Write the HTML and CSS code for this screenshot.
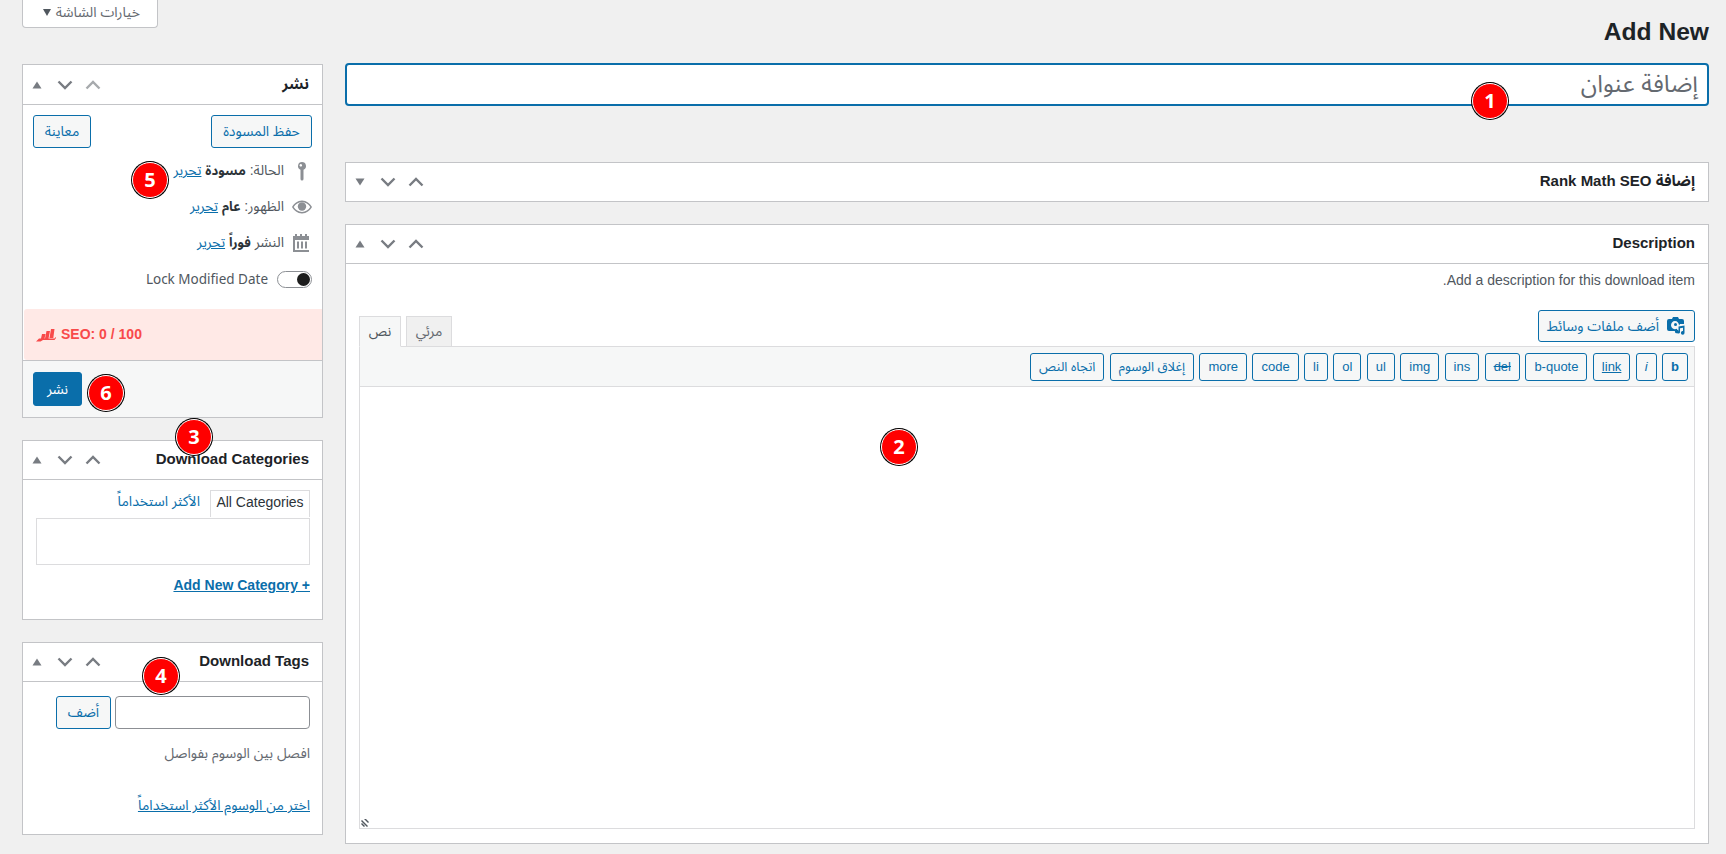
FILE: index.html
```html
<!DOCTYPE html>
<html lang="ar" dir="rtl">
<head>
<meta charset="utf-8">
<title>Add New</title>
<link rel="stylesheet" href="styles.css">
</head>
<body>
<div class="page">
  <header class="top">
    <h1 class="page-title" dir="ltr">Add New</h1>
    <button class="screen-options"><span>خيارات الشاشة</span><i class="screen-arrow"></i></button>
  </header>

  <div class="columns">
    <main class="main">
      <div class="title-input">إضافة عنوان</div>

      <section class="box collapsed rank">
        <div class="box-head">
          <h2>إضافة Rank Math SEO</h2>
          <div class="ctrls">
            <svg class="chev" viewBox="0 0 28 16"><path d="M7.500 11.500l6.500-6.500 6.500 6.500"/></svg>
            <svg class="chev" viewBox="0 0 28 16"><path d="M7.500 4.500l6.500 6.500 6.500-6.500"/></svg>
            <svg class="tri" viewBox="0 0 28 16"><path d="M9.500 4.500h9l-4.500 7z"/></svg>
          </div>
        </div>
      </section>

      <section class="box desc">
        <div class="box-head">
          <h2>Description</h2>
          <div class="ctrls">
            <svg class="chev" viewBox="0 0 28 16"><path d="M7.500 11.500l6.500-6.500 6.500 6.500"/></svg>
            <svg class="chev" viewBox="0 0 28 16"><path d="M7.500 4.500l6.500 6.500 6.500-6.500"/></svg>
            <svg class="tri" viewBox="0 0 28 16"><path d="M9.500 11.500h9l-4.500-7z"/></svg>
          </div>
        </div>
        <div class="desc-body">
          <p class="desc-note">Add a description for this download item.</p>
          <div class="editor-bar">
            <button class="btn media-btn">
              <svg class="media-icon" viewBox="0 0 18 18"><path fill-rule="evenodd" d="M2 2h3l1-2h5l1 2h3a2 2 0 0 1 2 2v3h-4l-1 1.500a4 4 0 1 0-3 3.500l1-.3V14H2a2 2 0 0 1-2-2V4a2 2 0 0 1 2-2z"/><circle cx="8.500" cy="7.500" r="1.500"/><path d="M10 16.200a1.800 1.800 0 1 1 1.500-1.800V9.500l6-1v7.300a1.800 1.800 0 1 1-1.500-1.700v-3.300l-3 .5v4.100a1.800 1.800 0 0 1-3 .5z"/></svg>
              <span>أضف ملفات وسائط</span>
            </button>
            <div class="tabs">
              <span class="tab">مرئي</span>
              <span class="tab active">نص</span>
            </div>
          </div>
          <div class="toolbar">
            <button class="qt b">b</button>
            <button class="qt it">i</button>
            <button class="qt un">link</button>
            <button class="qt">b-quote</button>
            <button class="qt del">del</button>
            <button class="qt">ins</button>
            <button class="qt">img</button>
            <button class="qt">ul</button>
            <button class="qt">ol</button>
            <button class="qt">li</button>
            <button class="qt">code</button>
            <button class="qt">more</button>
            <button class="qt">إغلاق الوسوم</button>
            <button class="qt">اتجاه النص</button>
          </div>
          <div class="editor">
            <svg class="grip" viewBox="0 0 8 8"><path d="M0 2l1-1 6 6-1 1zM0 5l1-1 3 3-1 1zM3 0l1-1 4 4-1 1z"/></svg>
          </div>
        </div>
      </section>
    </main>

    <aside class="side">
      <section class="box publish">
        <div class="box-head">
          <h2>نشر</h2>
          <div class="ctrls">
            <svg class="chev off" viewBox="0 0 28 16"><path d="M7.500 11.500l6.500-6.500 6.500 6.500"/></svg>
            <svg class="chev" viewBox="0 0 28 16"><path d="M7.500 4.500l6.500 6.500 6.500-6.500"/></svg>
            <svg class="tri" viewBox="0 0 28 16"><path d="M9.500 11.500h9l-4.500-7z"/></svg>
          </div>
        </div>
        <div class="pub-actions">
          <button class="btn save">حفظ المسودة</button>
          <button class="btn preview">معاينة</button>
        </div>
        <div class="pub-row">
          <svg class="pub-icon" viewBox="0 0 20 20"><path fill-rule="evenodd" d="M10 1a4 4 0 0 1 1.500 7.700V18a1.500 1.500 0 0 1-3 0V8.700A4 4 0 0 1 10 1zM8.800 3a1.300 1.300 0 1 0 .01 0z"/></svg>
          <span>الحالة: <b>مسودة</b> <a href="#">تحرير</a></span>
        </div>
        <div class="pub-row">
          <svg class="pub-icon" viewBox="0 0 20 20"><path fill-rule="evenodd" d="M10 3.500c4.500 0 8 3 10 6.500-2 3.500-5.500 6.500-10 6.500S2 13.500 0 10c2-3.500 5.500-6.500 10-6.500zM10 5c-3.500 0-6.500 2.200-8.300 5 1.800 2.800 4.800 5 8.300 5s6.500-2.200 8.300-5C16.500 7.200 13.500 5 10 5z"/><circle cx="10" cy="9.500" r="4.200"/></svg>
          <span>الظهور: <b>عام</b> <a href="#">تحرير</a></span>
        </div>
        <div class="pub-row">
          <svg class="pub-icon" viewBox="0 0 20 20"><path fill-rule="evenodd" d="M1 3h2V1h2v2h3V1h2v2h3V1h2v2h2v16H1zM3 7v10h14V7z"/><path d="M5 8.500h2v7H5zM9 8.500h2v7H9zM13 8.500h2v7h-2z"/></svg>
          <span>النشر <b>فوراً</b> <a href="#">تحرير</a></span>
        </div>
        <div class="pub-row lock">
          <span class="toggle"><i></i></span>
          <span class="lock-label" dir="ltr">Lock Modified Date</span>
        </div>
        <div class="seo" dir="ltr">
          <svg class="seo-icon" viewBox="0 0 20 14"><path d="M6 6h3.500l-1 4.500H5zM10.500 3H14l-1.500 7.500H9zM15 1h3.500l-1.200 9H13.500zM0 13.500l3-3h15.500l1-1.500 .5 1-1.500 2H7l-2.500 1.500z"/></svg>
          <span>SEO: 0 / 100</span>
        </div>
        <div class="pub-foot">
          <button class="btn primary">نشر</button>
        </div>
      </section>

      <section class="box cats">
        <div class="box-head">
          <h2>Download Categories</h2>
          <div class="ctrls">
            <svg class="chev" viewBox="0 0 28 16"><path d="M7.500 11.500l6.500-6.500 6.500 6.500"/></svg>
            <svg class="chev" viewBox="0 0 28 16"><path d="M7.500 4.500l6.500 6.500 6.500-6.500"/></svg>
            <svg class="tri" viewBox="0 0 28 16"><path d="M9.500 11.500h9l-4.500-7z"/></svg>
          </div>
        </div>
        <div class="cats-body">
          <div class="cat-tabs">
            <span class="cat-tab">All Categories</span>
            <a class="cat-link" href="#">الأكثر استخداماً</a>
          </div>
          <div class="cat-list"></div>
          <a class="add-cat" href="#">+ Add New Category</a>
        </div>
      </section>

      <section class="box tags">
        <div class="box-head">
          <h2>Download Tags</h2>
          <div class="ctrls">
            <svg class="chev" viewBox="0 0 28 16"><path d="M7.500 11.500l6.500-6.500 6.500 6.500"/></svg>
            <svg class="chev" viewBox="0 0 28 16"><path d="M7.500 4.500l6.500 6.500 6.500-6.500"/></svg>
            <svg class="tri" viewBox="0 0 28 16"><path d="M9.500 11.500h9l-4.500-7z"/></svg>
          </div>
        </div>
        <div class="tags-body">
          <div class="tag-form">
            <div class="tag-input"></div>
            <button class="btn add">أضف</button>
          </div>
          <p class="tag-hint">افصل بين الوسوم بفواصل</p>
          <a class="tag-link" href="#">اختر من الوسوم الأكثر استخداماً</a>
        </div>
      </section>
    </aside>
  </div>

  <span class="badge n1">1</span>
  <span class="badge n2">2</span>
  <span class="badge n3">3</span>
  <span class="badge n4">4</span>
  <span class="badge n5">5</span>
  <span class="badge n6">6</span>
</div>
</body>
</html>
```
FILE: styles.css
```css
* { box-sizing: border-box; }
html, body { margin: 0; height: 100%; }
body {
  background: #f0f0f0;
  color: #3c434a;
  font-family: "Liberation Sans", "Noto Sans Arabic", sans-serif;
  font-size: 14px;
  line-height: 1.4;
  overflow: hidden;
}
a { color: #0a6eaa; }
button { font-family: inherit; cursor: pointer; }
.page { position: relative; height: 854px; padding: 0 17px 0 22px; }

.top { display: flex; justify-content: space-between; align-items: flex-start; height: 63px; }
.page-title { margin: 14px 0 0; font-size: 24.6px; line-height: 36px; font-weight: 700; color: #1d2327; }
.screen-options {
  display: flex; align-items: center; gap: 5px;
  width: 136px; height: 28px; padding: 0 17px 2px 0;
  background: #fff; color: #646970; font-size: 14px;
  border: 1px solid #c3c4c7; border-top: 0; border-radius: 0 0 4px 4px;
}
.screen-arrow { width: 0; height: 0; border: 4px solid transparent; border-top: 7px solid #50575e; border-bottom: 0; }

.columns { display: grid; grid-template-columns: 1fr 301px; gap: 22px; align-items: start; }
.main { min-width: 0; }
.side { padding-top: 1px; }

.title-input {
  height: 43px; padding: 0 9px;
  background: #fff; color: #646970;
  border: 2px solid #0a6eaa; border-radius: 4px;
  font-size: 24px; line-height: 38px;
  margin-bottom: 56px;
}

.box { background: #fff; border: 1px solid #c3c4c7; margin-bottom: 22px; }
.box-head { display: flex; justify-content: space-between; align-items: center; height: 39px; border-bottom: 1px solid #c3c4c7; padding-right: 13px; }
.collapsed .box-head { height: 38px; border-bottom: 0; }
.publish .box-head { height: 40px; }
.box-head h2 { margin: 0; padding-bottom: 2px; font-size: 15px; font-weight: 700; color: #1d2327; line-height: 20px; }
.ctrls { display: flex; }
.chev, .tri { display: block; width: 28px; height: 16px; }
.chev path { fill: none; stroke: #787c82; stroke-width: 2.4; }
.chev.off path { stroke: #a7aaad; }
.tri path { fill: #787c82; }

.desc-body { padding: 0 13px 14px; }
.desc-note { margin: 0; padding-top: 6px; height: 46px; line-height: 20px; color: #50575e; font-size: 14px; }
.editor-bar { display: flex; justify-content: space-between; align-items: flex-start; height: 36px; }
.btn {
  background: #f6f7f7; color: #0a6eaa;
  border: 1px solid #0a6eaa; border-radius: 3px;
  font-size: 14px; padding: 0 10px;
}
.media-btn { display: flex; align-items: center; gap: 8px; width: 157px; height: 32px; padding: 0 9px; white-space: nowrap; }
.media-icon { width: 18px; height: 18px; fill: #0a6eaa; flex: none; }
.tabs { display: flex; gap: 5px; height: 37px; padding-top: 6px; position: relative; }
.tab {
  display: block; width: 46px; height: 31px; line-height: 28px; text-align: center;
  background: #f0f0f0; color: #646970;
  border: 1px solid #dcdcde; border-bottom-color: #dcdcde;
}
.tab.active { width: 42px; background: #f6f7f7; color: #50575e; border-bottom-color: #f6f7f7; }

.toolbar {
  display: flex; gap: 5.400px; height: 41px; padding: 6px 6px 6px 5px;
  background: #f6f7f7; border: 1px solid #dcdcde;
}
.qt {
  height: 28px; padding: 0 8px;
  background: #f6f7f7; color: #0a6eaa;
  border: 1px solid #0a6eaa; border-radius: 3px;
  font-size: 13px; line-height: 26px;
}
.qt.b { font-weight: 700; }
.qt.it { font-style: italic; }
.qt.un { text-decoration: underline; }
.qt.del { text-decoration: line-through; }
.editor { position: relative; height: 442px; background: #fff; border: 1px solid #dcdcde; border-top: 0; }
.grip { position: absolute; left: 1px; bottom: 1px; width: 8px; height: 8px; fill: #50575e; }

.pub-actions { display: flex; justify-content: space-between; padding: 10px 10px 5px; }
.save, .preview { height: 33px; }
.save { width: 101px; padding: 0; }
.preview { width: 58px; padding: 0; }
.pub-row { display: flex; align-items: center; gap: 8px; height: 36px; padding-right: 10px; color: #50575e; }
.pub-row b { color: #2c3338; font-size: 13px; }
.pub-icon { width: 20px; height: 20px; fill: #8c8f94; flex: none; }
.lock { gap: 9px; }
.lock-label { font-family: "Noto Sans", sans-serif; font-size: 13.500px; }
.toggle { position: relative; display: block; width: 35px; height: 17px; background: #fff; border: 1px solid #8c8f94; border-radius: 9px; flex: none; }
.toggle i { position: absolute; right: 1px; top: 1px; width: 13px; height: 13px; border-radius: 50%; background: #1d1d1d; }
.seo {
  display: flex; align-items: center; gap: 5px;
  height: 51px; margin: 12px 0 0 1px; padding-left: 12px;
  background: #ffe9e6; color: #f84a4a; font-weight: 700; font-size: 14px;
  border-radius: 3px 0 0 3px;
}
.seo-icon { width: 20px; height: 14px; fill: #f84a4a; }
.pub-foot { padding: 11px 10px; background: #f6f7f7; border-top: 1px solid #c3c4c7; height: 57px; }
.primary { display: block; width: 49px; height: 34px; padding: 0; background: #0a6eaa; color: #fff; margin-right: auto; }

.cats-body { padding: 10px 12px 24px 13px; height: 139px; }
.cat-tabs { display: flex; align-items: flex-start; gap: 10px; height: 27px; }
.cat-tab { display: block; height: 27px; width: 100px; text-align: center; line-height: 22px; font-size: 14px; color: #2c3338; border: 1px solid #dcdcde; border-bottom: 0; }
.cat-link { font-size: 14px; line-height: 22px; text-decoration: none; }
.cat-list { height: 47px; margin: 1px 0 10px; border: 1px solid #dcdcde; }
.add-cat { display: block; font-size: 14px; font-weight: 700; line-height: 20px; text-align: right; }

.tags-body { padding: 14px 12px 19px; }
.tag-form { display: flex; gap: 4px; }
.tag-input { width: 195px; height: 33px; background: #fff; border: 1px solid #8c8f94; border-radius: 4px; }
.add { width: 55px; height: 33px; padding: 0; }
.tag-hint { margin: 14px 0 32px; line-height: 20px; color: #646970; }
.tag-link { display: block; line-height: 20px; }

.badge {
  position: absolute; width: 36px; height: 36px;
  display: flex; align-items: center; justify-content: center;
  background: #f00; color: #fff;
  border: 1px solid #fff; border-radius: 50%; box-shadow: 0 0 0 1px #000;
  font-family: "Open Sans", sans-serif; font-weight: 700; font-size: 20px; line-height: 1;
}
.n1 { left: 1472px; top: 83px; }
.n2 { left: 881px; top: 429px; }
.n3 { left: 176px; top: 419px; }
.n4 { left: 143px; top: 658px; }
.n5 { left: 132px; top: 162px; }
.n6 { left: 88px; top: 375px; }
```
